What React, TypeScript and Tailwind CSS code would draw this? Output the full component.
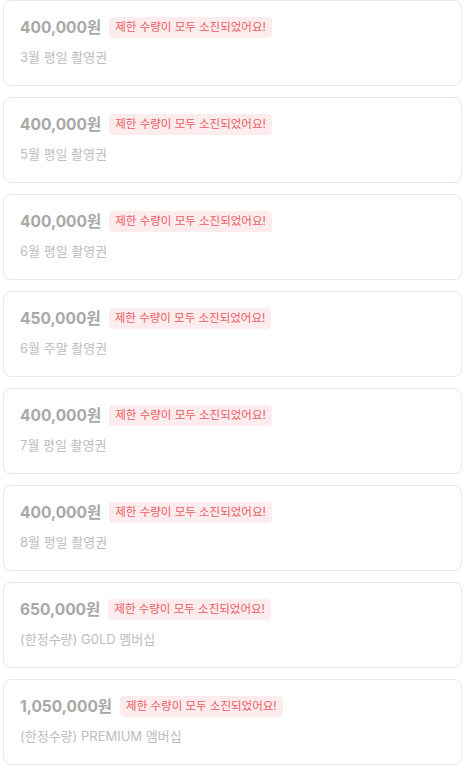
import React from "react";

const items = [
  { price: "400,000원", name: "3월 평일 촬영권" },
  { price: "400,000원", name: "5월 평일 촬영권" },
  { price: "400,000원", name: "6월 평일 촬영권" },
  { price: "450,000원", name: "6월 주말 촬영권" },
  { price: "400,000원", name: "7월 평일 촬영권" },
  { price: "400,000원", name: "8월 평일 촬영권" },
  { price: "650,000원", name: "(한정수량) G0LD 멤버십" },
  { price: "1,050,000원", name: "(한정수량) PREMIUM 멤버십" },
];

export default function App() {
  return (
    <div
      className="w-[465px] min-h-[771px] bg-white pl-[3px] pr-[3px] flex flex-col gap-[11px]"
      style={{ fontFamily: '"Inter", "Noto Sans CJK KR", sans-serif' }}
    >
      {items.map((it, i) => (
        <div
          key={i}
          className="w-[459px] h-[86px] border border-[#e8e8e8] rounded-[8px] px-4 pt-4 flex flex-col"
        >
          <div className="flex items-center gap-2 h-[21px]">
            <span className="text-[15.5px] font-bold text-[#a8a8a8] leading-none">
              {it.price}
            </span>
            <span className="h-[21px] px-[6px] rounded-[4px] bg-[#fdecee] text-[#ec5a5f] text-[11.5px] leading-[21px]">
              제한 수량이 모두 소진되었어요!
            </span>
          </div>
          <div className="mt-[9px] text-[13px] leading-[20px] text-[#bdbdbd]">{it.name}</div>
        </div>
      ))}
    </div>
  );
}
